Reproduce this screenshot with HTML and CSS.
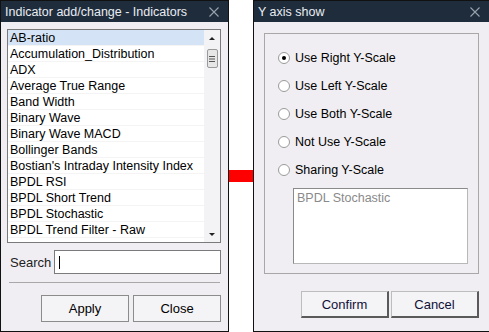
FILE: index.html
```html
<!DOCTYPE html>
<html>
<head>
  <title>Indicators</title>
  <link rel="stylesheet" href="styles.css">
</head>
<body>
  <div class="dialog left">
    <div class="titlebar">
      <span>Indicator add/change - Indicators</span>
      <svg class="close" width="10" height="10" viewBox="0 0 10 10"><path d="M0.5 0.5L9.5 9.5M9.5 0.5L0.5 9.5" stroke="#9aa3ad" stroke-width="1.1"/></svg>
    </div>
    <div class="content">
      <div class="listbox">
        <ul class="items">
          <li class="selected">AB-ratio</li>
          <li>Accumulation_Distribution</li>
          <li>ADX</li>
          <li>Average True Range</li>
          <li>Band Width</li>
          <li>Binary Wave</li>
          <li>Binary Wave MACD</li>
          <li>Bollinger Bands</li>
          <li>Bostian's Intraday Intensity Index</li>
          <li>BPDL RSI</li>
          <li>BPDL Short Trend</li>
          <li>BPDL Stochastic</li>
          <li>BPDL Trend Filter - Raw</li>
        </ul>
        <div class="scrollbar">
          <svg width="16" height="10" viewBox="0 0 16 10"><path d="M5 7L11 7L8 4Z" fill="#222"/></svg>
          <div class="thumb">
            <svg width="8" height="8" viewBox="0 0 8 8"><path d="M1 1.5H7M1 4H7M1 6.5H7" stroke="#555" stroke-width="1"/></svg>
          </div>
          <div class="spacer"></div>
          <svg width="16" height="10" viewBox="0 0 16 10"><path d="M5 3L11 3L8 6Z" fill="#222"/></svg>
        </div>
      </div>
      <div class="search">
        <label>Search</label>
        <div class="input"><span class="caret"></span></div>
      </div>
      <div class="separator"></div>
      <div class="buttons">
        <button class="btn flat">Apply</button>
        <button class="btn flat">Close</button>
      </div>
    </div>
  </div>

  <div class="gap"><div class="arrow"></div></div>

  <div class="dialog right">
    <div class="titlebar">
      <span>Y axis show</span>
      <svg class="close" width="10" height="10" viewBox="0 0 10 10"><path d="M0.5 0.5L9.5 9.5M9.5 0.5L0.5 9.5" stroke="#9aa3ad" stroke-width="1.1"/></svg>
    </div>
    <div class="content">
      <div class="group">
        <div class="radio checked"><span class="dot"></span>Use Right Y-Scale</div>
        <div class="radio"><span class="dot"></span>Use Left Y-Scale</div>
        <div class="radio"><span class="dot"></span>Use Both Y-Scale</div>
        <div class="radio"><span class="dot"></span>Not Use Y-Scale</div>
        <div class="radio"><span class="dot"></span>Sharing Y-Scale</div>
        <div class="textarea">BPDL Stochastic</div>
      </div>
      <div class="buttons">
        <button class="btn raised">Confirm</button>
        <button class="btn raised">Cancel</button>
      </div>
    </div>
  </div>
</body>
</html>
```

FILE: styles.css
```css
body {
  margin: 0;
  width: 489px;
  height: 332px;
  display: flex;
  background: #fff;
  font-family: 'Liberation Sans', Arial, sans-serif;
  font-size: 12px;
  color: #000;
  overflow: hidden;
}
.dialog {
  box-sizing: border-box;
  height: 332px;
  border: 1px solid #111;
  background: #f0eef2;
  display: flex;
  flex-direction: column;
}
.left {
  width: 229px;
}
.right {
  width: 236px;
  border-right: none;
}
.gap {
  width: 24px;
  display: flex;
  flex-direction: column;
  justify-content: flex-start;
}
.arrow {
  margin-top: 170px;
  height: 12px;
  background: #ff0000;
}
.titlebar {
  height: 21px;
  background: #1f2c3c;
  color: #e9edf2;
  display: flex;
  align-items: center;
  justify-content: space-between;
  padding: 0 9px 0 4px;
  font-size: 12.5px;
}
.close {
  display: block;
}
.left .content {
  padding: 7px 7px 0 6px;
}
.listbox {
  height: 214px;
  box-sizing: border-box;
  border: 1px solid #7a7a7a;
  background: #fff;
  display: flex;
}
.items {
  list-style: none;
  margin: 0;
  padding: 0;
  flex: 1;
  font-size: 12.5px;
}
.items li {
  height: 16px;
  line-height: 16px;
  padding-left: 2px;
  border-bottom: 0.5px solid #f4f4f4;
  box-sizing: border-box;
  white-space: nowrap;
}
.items li.selected {
  background: #d4e4f6;
}
.scrollbar {
  width: 16px;
  background: #f3f2f4;
  display: flex;
  flex-direction: column;
  align-items: center;
  padding-top: 3px;
  padding-bottom: 2px;
}
.thumb {
  margin-top: 6px;
  width: 11px;
  height: 19px;
  box-sizing: border-box;
  border: 1px solid #9a9a9a;
  border-radius: 2px;
  background: #e6e6e6;
  display: flex;
  align-items: center;
  justify-content: center;
}
.spacer {
  flex: 1;
}
.search {
  display: flex;
  align-items: center;
  margin-top: 7px;
  height: 24px;
}
.search label {
  width: 44px;
  padding-left: 3px;
  font-size: 13px;
  color: #222;
}
.input {
  flex: 1;
  height: 24px;
  box-sizing: border-box;
  border: 1px solid #7a7a7a;
  background: #fff;
  display: flex;
  align-items: center;
  padding-left: 4px;
}
.caret {
  width: 1px;
  height: 13px;
  background: #000;
}
.separator {
  margin: 8px 1px 0 2px;
  border-top: 1px solid #a8a8a8;
}
.left .buttons {
  margin-top: 12px;
  display: flex;
  justify-content: flex-end;
  gap: 4px;
}
.btn {
  font-family: 'Liberation Sans', Arial, sans-serif;
  font-size: 13px;
  color: #000;
  width: 88px;
  height: 27px;
  padding: 0;
  box-sizing: border-box;
  background: #f4f3f6;
}
.btn.flat {
  border: 1px solid #8c8c8c;
}
.btn.raised {
  border: 1px solid #bdbdbd;
  border-right: 2px solid #5a5a5a;
  border-bottom: 2px solid #5a5a5a;
  color: #101038;
}
.right .content {
  padding: 11px 10px 0 10px;
}
.group {
  height: 241px;
  box-sizing: border-box;
  border: 1px solid #a8a8a8;
  padding: 10px 0 0 13px;
}
.radio {
  height: 28px;
  display: flex;
  align-items: center;
  gap: 5px;
  font-size: 12.5px;
}
.dot {
  width: 12px;
  height: 12px;
  border-radius: 50%;
  box-sizing: border-box;
  border: 1px solid #9a9a9a;
  background: #fff;
  position: relative;
}
.checked .dot::after {
  content: '';
  position: absolute;
  left: 3px;
  top: 3px;
  width: 4px;
  height: 4px;
  border-radius: 50%;
  background: #000;
}
.textarea {
  margin: 4px 0 0 15px;
  width: 175px;
  height: 76px;
  box-sizing: border-box;
  border: 1px solid #b8b8b8;
  border-top-color: #8a8a8a;
  border-left-color: #8a8a8a;
  background: #fff;
  color: #8a8a8a;
  padding: 2px 3px;
  font-size: 12.5px;
}
.right .buttons {
  margin-top: 17px;
  display: flex;
  justify-content: flex-end;
  gap: 2px;
}
```
